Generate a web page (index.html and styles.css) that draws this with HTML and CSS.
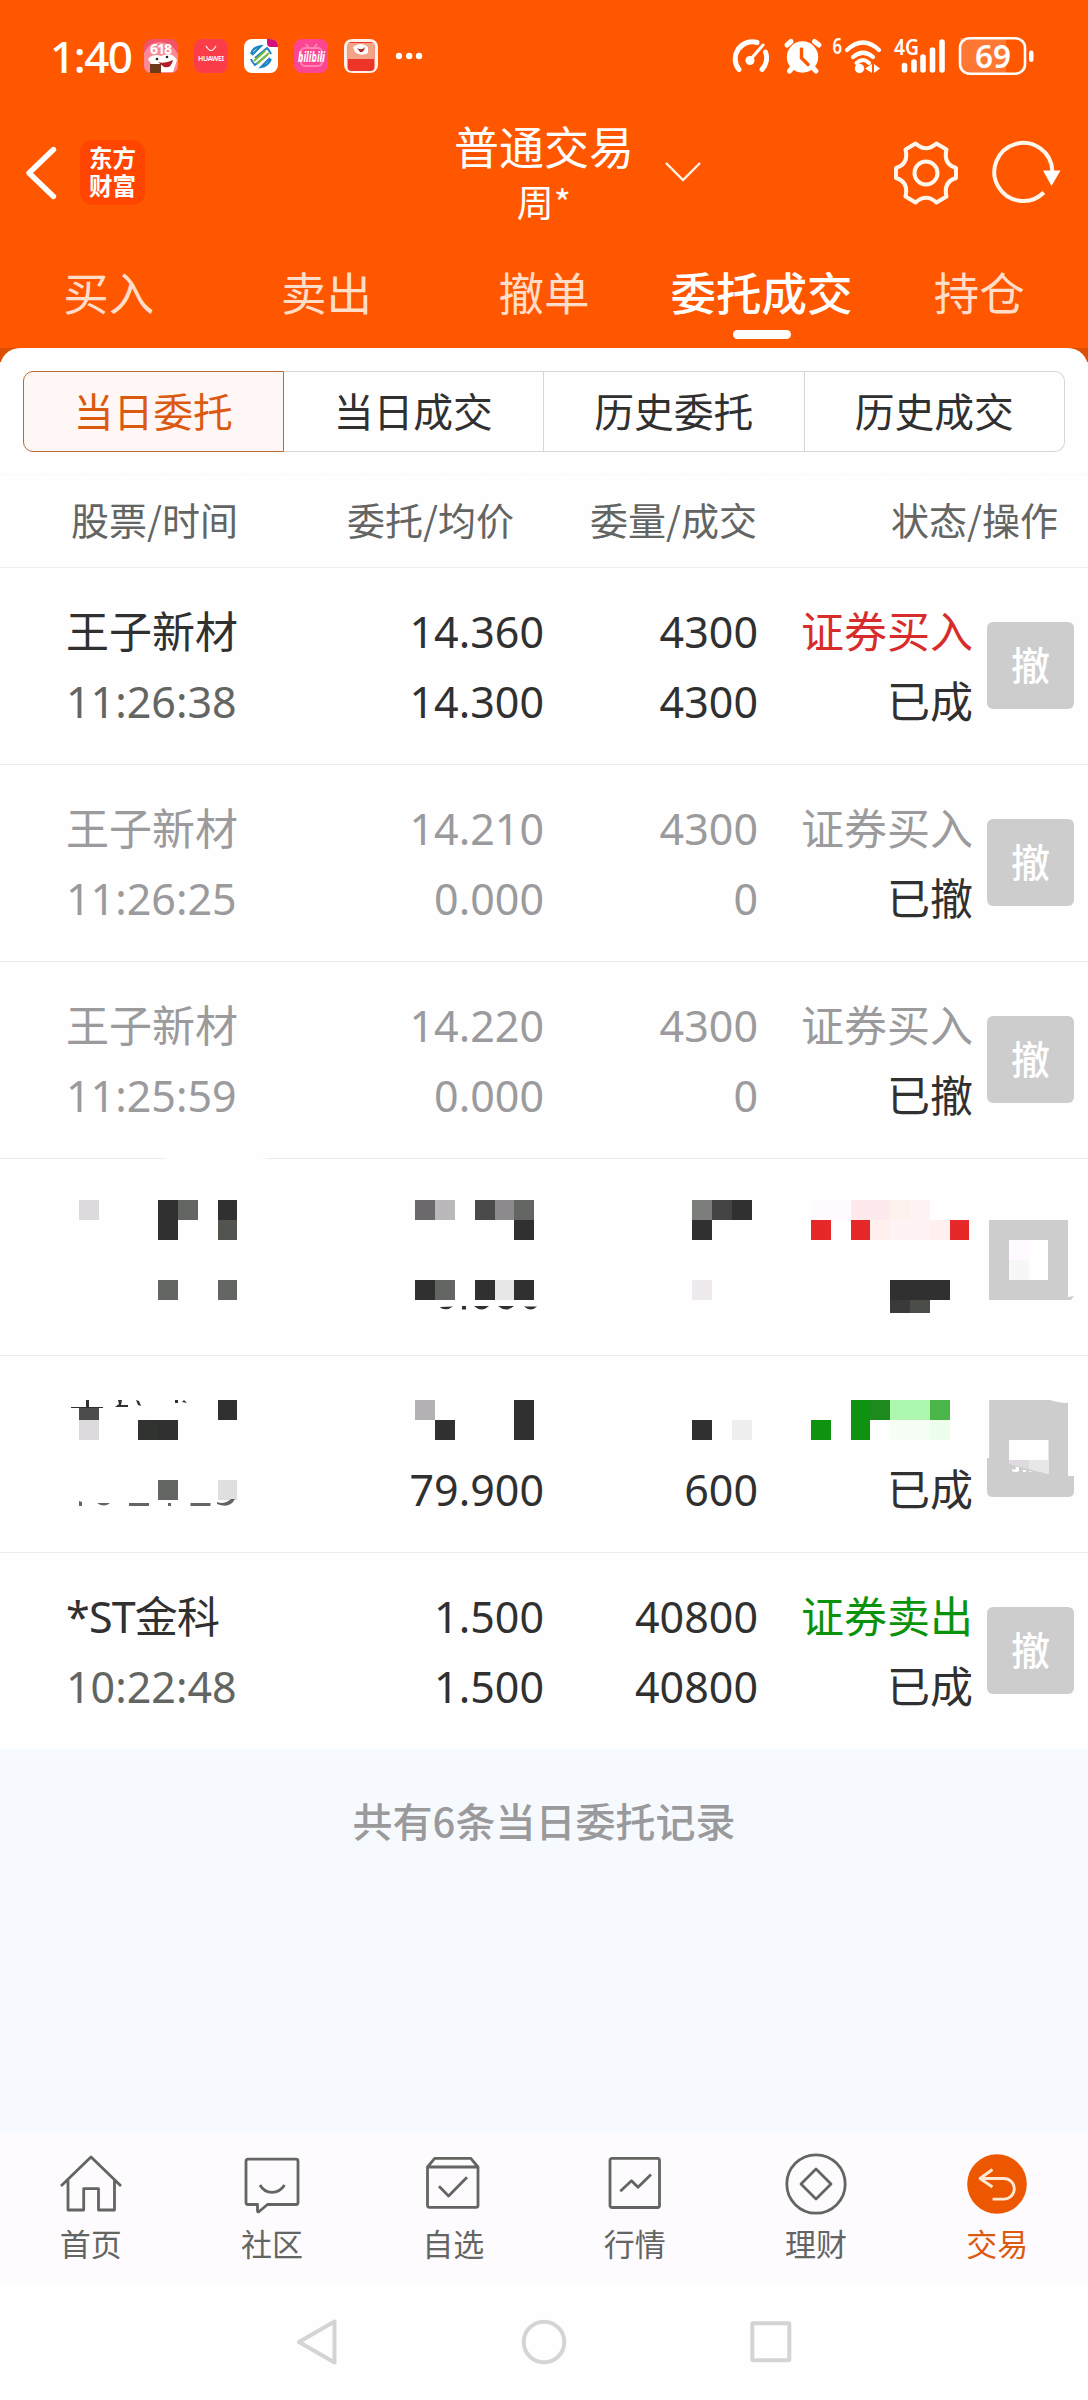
FILE: index.html
```html
<!DOCTYPE html>
<html lang="zh-CN">
<head>
<meta charset="utf-8">
<title>普通交易</title>
<link rel="stylesheet" href="styles.css">
</head>
<body>
<div class="screen">
  <header class="header">
    <div class="status">
      <span class="clock">1:40</span>
      <div class="apps">
        <svg class="app" viewBox="0 0 34 34"><rect width="34" height="34" rx="8" fill="#f2526a"/><path d="M0 14Q6 2 17 3T34 15V26Q34 34 26 34H8Q0 34 0 26Z" fill="#fa8a95"/><text x="6" y="15" font-size="14" font-weight="700" fill="#fff" textLength="22">618</text><path d="M4 20Q9 14 17 17Q28 12 33 21L29 33H12Z" fill="#fff"/><path d="M14 23Q21 25 29 21Q27 30 20 28Z" fill="#b01e2c"/><circle cx="13" cy="20" r="1.3" fill="#222"/><circle cx="23" cy="18" r="1.3" fill="#222"/><rect x="6" y="25" width="11" height="9" fill="#6d3b1c"/></svg>
        <svg class="app" viewBox="0 0 34 34"><rect width="34" height="34" rx="8" fill="#fb3d49"/><path d="M12 7Q17 16 22 7" fill="none" stroke="#fff" stroke-width="1.1"/><text x="4" y="22" font-size="7" font-weight="600" fill="#fff" textLength="26">HUAWEI</text></svg>
        <svg class="app" viewBox="0 0 34 34"><rect width="34" height="34" rx="8" fill="#fff"/><path d="M23 0H26Q34 0 34 8H27Q23 8 23 4Z" fill="#d3107c"/><g fill="none" stroke-width="2"><path d="M7 15Q9 8 17 7L8 16M11 19L23 9Q26 12 27 15M27 20Q24 27 17 28L26 19M23 16L11 26Q8 23 7 20" stroke="#1b83c4"/><path d="M10 22L21 12M13 25L25 14" stroke="#7fb934"/></g></svg>
        <svg class="app" viewBox="0 0 34 34"><rect width="34" height="34" rx="8" fill="#fd4691"/><rect x="7" y="9" width="21" height="18" rx="4" fill="none" stroke="#ff83b5" stroke-width="2"/><path d="M12 5L15 9M23 5L20 9" stroke="#ff83b5" stroke-width="2"/><text x="4" y="23" font-size="14" font-weight="700" font-style="italic" fill="#fff" textLength="27" lengthAdjust="spacingAndGlyphs">bilibili</text></svg>
        <svg class="app" viewBox="0 0 34 34"><rect width="34" height="34" rx="8" fill="#fff1ea"/><rect x="3.5" y="3" width="27" height="29" rx="4" fill="#ed3429"/><path d="M4 4H30V20H4Z" fill="#f3a487"/><path d="M9 8Q17 2 24 8V14Q17 18 11 13Z" fill="#fff"/><path d="M13 9Q18 12 21 8Q20 14 16 13Z" fill="#a62822"/></svg>
      </div>
      <svg class="more" viewBox="0 0 28 8"><g fill="#fff"><circle cx="4" cy="4" r="3.2"/><circle cx="14.200" cy="4" r="3.2"/><circle cx="24" cy="4" r="3.2"/></g></svg>
      <svg class="signals" viewBox="724 32 316 48">
        <g fill="none" stroke="#fff" stroke-width="5" stroke-linecap="round">
          <path d="M739 69.500A17 17 0 0 1 757 42.500M765.500 52A17 17 0 0 1 762 69.500"/>
          <path d="M750 60L763 45" stroke-width="3"/>
          <path d="M787 45L791 41.500M814.500 41.500L819 45M789.500 71L793 67M812 67L816 71"/>
          <path d="M847 50Q863 35 879 50M853 57Q863 48.500 873 57" stroke-width="4.200"/>
          <path d="M856.500 63Q860 60 863 60Q866 60 869 63" stroke-width="4"/>
          <path d="M904.500 65.500V70M914 62V70M923 57V70M932.500 50V70M942 42V70" stroke-width="5.600"/>
        </g>
        <g fill="#fff">
          <circle cx="750" cy="60.500" r="4.500"/><circle cx="802.500" cy="57" r="15.700"/><circle cx="859.500" cy="68.500" r="4.700"/>
          <path d="M872 64V73L865 68.500ZM874 64L880 68.500L874 73Z"/>
          <rect x="1029" y="50.500" width="4.500" height="11.500" rx="2.200"/>
        </g>
        <path d="M801.500 49V58L808 64.500" fill="none" stroke="#ff5700" stroke-width="3.400" stroke-linecap="round"/>
        <path d="M960 38H1006V74H968Q960 74 960 66Z" fill="#fff" opacity=".2"/>
        <rect x="960" y="38.200" width="65" height="35.500" rx="9.500" fill="none" stroke="#fff" stroke-width="2.600"/>
        <g fill="#fff" font-weight="600"><text x="832.500" y="53.500" font-size="21" textLength="9.500" lengthAdjust="spacingAndGlyphs">6</text><text x="894" y="55" font-size="22" textLength="25" lengthAdjust="spacingAndGlyphs">4G</text><text x="975" y="67.800" font-size="33" textLength="36" lengthAdjust="spacingAndGlyphs">69</text></g>
      </svg>
    </div>

    <div class="titlebar">
      <div class="brand">
        <svg class="back" viewBox="0 0 32 56"><path d="M28.500 4.500L4 28L28.500 51.500" fill="none" stroke="#fff" stroke-width="5.400" stroke-linecap="round" stroke-linejoin="round"/></svg>
        <div class="logo">东方财富</div>
      </div>
      <div class="account">
        <h1>普通交易</h1>
        <p>周*</p>
      </div>
      <div class="tools">
        <svg class="chevron" viewBox="0 0 38 22"><path d="M2 2L19 19L36 2" fill="none" stroke="#fff4e6" stroke-width="2.400"/></svg>
        <svg class="gear" viewBox="-34 -34 68 68"><g fill="none" stroke="#fff6ec" stroke-width="4" stroke-linejoin="round"><path d="M-10.400-29.500Q0-20 10.400-29.500L20.500-23.500Q17-9 30-5V5Q17 9 20.500 23.500L10.400 29.500Q0 20-10.400 29.500L-20.500 23.500Q-17 9-30 5V-5Q-17-9-20.500-23.500Z"/><circle r="11.500"/></g></svg>
        <svg class="refresh" viewBox="-34 -34 72 68"><path d="M29.300-2A29 29 0 1 0 20.800 19.500" fill="none" stroke="#fff6ec" stroke-width="4"/><path d="M20-2.500H37.500L28.500 13Z" fill="#fff"/></svg>
      </div>
    </div>

    <nav class="tabs">
      <span>买入</span><span>卖出</span><span>撤单</span><span class="current">委托成交</span><span>持仓</span>
    </nav>
  </header>

  <main class="sheet-back">
    <div class="sheet">
      <div class="segments">
        <span class="on">当日委托</span><span>当日成交</span><span>历史委托</span><span>历史成交</span>
      </div>
      <div class="columns">
        <span>股票/时间</span><span>委托/均价</span><span>委量/成交</span><span>状态/操作</span>
      </div>

      <section class="row">
        <div class="cell name"><b>王子新材</b><i>11:26:38</i></div>
        <div class="cell"><b>14.360</b><b>14.300</b></div>
        <div class="cell"><b>4300</b><b>4300</b></div>
        <div class="cell"><b class="buy">证券买入</b><b>已成</b></div>
        <span class="cancel">撤</span>
      </section>
      <section class="row void">
        <div class="cell name"><b>王子新材</b><i>11:26:25</i></div>
        <div class="cell"><b>14.210</b><b>0.000</b></div>
        <div class="cell"><b>4300</b><b>0</b></div>
        <div class="cell"><b>证券买入</b><b class="state">已撤</b></div>
        <span class="cancel">撤</span>
      </section>
      <section class="row void worn">
        <div class="cell name"><b>王子新材</b><i>11:25:59</i></div>
        <div class="cell"><b>14.220</b><b>0.000</b></div>
        <div class="cell"><b>4300</b><b>0</b></div>
        <div class="cell"><b>证券买入</b><b class="state">已撤</b></div>
        <span class="cancel">撤</span>
      </section>

      <!-- Redacted order: mosaic tiles on a 55-column grid -->
      <section class="row masked">
        <svg class="mosaic" viewBox="0 1159 1088 196">
          <g transform="scale(19.782 20)" shape-rendering="crispEdges">
            <g fill="#303030"><path d="M8 60h1v2h-1zM11 60h1v1h-1zM26 61h1v1h-1zM37 60h1v1h-1zM35 61h1v1h-1zM21 64h1v1h-1zM24 64h1v1h-1zM26 64h1v1h-1zM45 64h3v1h-3z"/></g>
            <g fill="#636562"><path d="M9 60h1v1h-1zM26 60h1v1h-1zM8 64h1v1h-1zM11 64h1v1h-1zM22 64h1v1h-1z"/></g>
            <rect x="4" y="60" width="1" height="1" fill="#dddadd"/><rect x="11" y="61" width="1" height="1" fill="#525450"/>
            <rect x="21" y="60" width="1" height="1" fill="#6b696c"/><rect x="22" y="60" width="1" height="1" fill="#bab8bb"/><rect x="24" y="60" width="1" height="1" fill="#4a4a4a"/><rect x="25" y="60" width="1" height="1" fill="#8d8a8e"/><rect x="25" y="64" width="1" height="1" fill="#e7e7e7"/>
            <rect x="35" y="60" width="1" height="1" fill="#7c7e7b"/><rect x="36" y="60" width="1" height="1" fill="#444"/><rect x="35" y="64" width="1" height="1" fill="#eeeaee"/>
            <rect x="41" y="60" width="2" height="1" fill="#fefaff"/><rect x="43" y="60" width="2" height="1" fill="#fee9ed"/><rect x="45" y="60" width="1" height="1" fill="#fef2ec"/><rect x="46" y="60" width="1" height="1" fill="#fff3f6"/>
            <rect x="44" y="61" width="4" height="1" fill="#ffefee"/><rect x="45" y="61" width="2" height="1" fill="#fff3f6"/>
            <path d="M41 61h1v1h-1zM43 61h1v1h-1zM48 61h1v1h-1z" fill="#e62829"/>
            <rect x="45" y="65" width="1" height=".65" fill="#3a3a3a"/><rect x="46" y="65" width="1" height=".65" fill="#4b4d49"/>
            <rect x="50" y="61" width="4" height="4" fill="#cdcdcd"/><rect x="51" y="62" width="2" height="2" fill="#fefefe"/><rect x="51" y="62" width="1" height="1" fill="#fffaff"/><rect x="51" y="63" width="1" height="1" fill="#f7f7f7"/>
          </g>
          <path d="M1068 1297L1074 1296L1071 1300H1066Z" fill="#cdcdcd"/>
          <path d="M440 1307L453 1306.500Q447 1311 441 1308ZM462 1306h4v3.500h-4zM474 1306h15q-7.500 7-15 0M498 1306h16q-8 7-16 0M524 1306.500h13q-6 6-13 0" fill="#303030"/>
        </svg>
      </section>

      <section class="row masked">
        <div class="cell name"></div>
        <div class="cell"><b></b><b>79.900</b></div>
        <div class="cell"><b></b><b>600</b></div>
        <div class="cell"><b></b><b>已成</b></div>
        <svg class="mosaic" viewBox="0 1356 1088 196">
          <path d="M989.200 1400H1050Q1058 1403 1068 1403V1476H1074V1491Q1074 1497 1068 1497H993Q987 1497 987 1491V1458H989.200Z" fill="#cdcdcd"/>
          <path d="M1009 1440H1048.500V1474L1009 1463.500Z" fill="#fefefe"/><path d="M1009 1460H1029V1469L1009 1463.500Z" fill="#dfdadf"/><path d="M1029 1460H1048.500V1474L1029 1469Z" fill="#e7e7e7"/>
          <path d="M1012 1469q4 2 4-2h3v4q-4 2-7 0zM1023 1470h3v2h-3zM1029 1471l4 1h-4z" fill="#fff"/>
          <g transform="scale(19.782 20)" shape-rendering="crispEdges">
            <path d="M8 71h1v1h-1zM11 70h1v1h-1zM22 71h1v1h-1zM26 70h1v2h-1zM35 71h1v1h-1z" fill="#303030"/>
            <rect x="7" y="71" width="1" height="1" fill="#303330"/><rect x="4" y="70.350" width="1" height=".65" fill="#4c4c4c"/><rect x="4" y="71" width="1" height="1" fill="#dddadd"/><rect x="21" y="70" width="1" height="1" fill="#b3b1b4"/><rect x="37" y="71" width="1" height="1" fill="#eee"/>
            <path d="M43 70h1v2h-1zM41 71h1v1h-1z" fill="#0f920f"/><rect x="44" y="70" width="1" height="1" fill="#1c8a1c"/><rect x="45" y="70" width="2" height="1" fill="#aef7ae"/><rect x="47" y="70" width="1" height="1" fill="#4ab549"/><rect x="45" y="71" width="2" height="1" fill="#f6fef6"/><rect x="47" y="71" width="1" height="1" fill="#edfeed"/>
            <rect x="8" y="74" width="1" height="1" fill="#636562"/><rect x="11" y="74" width="1" height="1" fill="#dfdfdf"/>
          </g>
          <path d="M86 1400h3v7h14v1H71v-1h15zM118 1400h4l-1 5h7v2h-13l4-3zM136 1400l3 1 2 5-3-1zM175 1400h3v3h-3zM182 1402l2-2 3 3z" fill="#303030"/>
          <path d="M79 1501l3 1v4h-3zM97 1503h13q-6 5-13 0M129 1503h20v3h-20zM168 1503h3v3h-3zM190.500 1503h20v3h-20zM217 1502q7 3 14-3h4q-5 10-18 5z" fill="#636562"/>
        </svg>
      </section>

      <section class="row last">
        <div class="cell name"><b class="mixed">*ST金科</b><i>10:22:48</i></div>
        <div class="cell"><b>1.500</b><b>1.500</b></div>
        <div class="cell"><b>40800</b><b>40800</b></div>
        <div class="cell"><b class="sell">证券卖出</b><b>已成</b></div>
        <span class="cancel">撤</span>
      </section>
    </div>
  </main>

  <div class="summary">共有6条当日委托记录</div>

  <nav class="dock">
    <a><svg viewBox="0 0 64 64"><path d="M2 34L32 5L62 34M9 27V58H24.700V36.700H39.500V58H55.500V27"/></svg>首页</a>
    <a><svg viewBox="0 0 64 64"><path d="M8 7.200H56Q58 7.200 58 9.200V50.500Q58 52.500 56 52.500H27.500L18.500 60Q17.500 60 17.500 59V52.500H8Q6 52.500 6 50.500V9.200Q6 7.200 8 7.200ZM20 33Q24 40.300 32 40.300T44.500 33"/></svg>社区</a>
    <a><svg viewBox="0 0 64 64"><path d="M6.500 15L13.700 6.300H49.800L57 15V53.500Q57 55.300 55 55.300H8.500Q6.500 55.300 6.500 53.500ZM6.500 15H57M18 34.300L27.600 44L46 25.300"/></svg>自选</a>
    <a><svg viewBox="0 0 64 64"><rect x="7" y="6.300" width="49.500" height="49.200" rx="2"/><path d="M17.300 39.300L28.500 28.700L35 35.300L48 22.500"/></svg>行情</a>
    <a><svg viewBox="0 0 64 64"><circle cx="32" cy="32" r="29.200"/><path d="M32 17L47 32L32 47L17 32Z"/></svg>理财</a>
    <a class="here"><svg viewBox="0 0 64 64"><circle cx="32" cy="32" r="29.800"/><path d="M27.500 17.500L15 26.500L27.500 35M15 26.500H39A10.300 10.300 0 0 1 39 47.100H27.600"/></svg>交易</a>
  </nav>

  <div class="sysnav">
    <svg viewBox="0 0 48 48"><path d="M6 24L41.500 3.500V44.500Z"/></svg>
    <svg viewBox="0 0 48 48"><circle cx="24" cy="24" r="20.300"/></svg>
    <svg viewBox="0 0 48 48"><rect x="5.300" y="5.300" width="37" height="37" rx="1"/></svg>
  </div>
</div>
</body>
</html>
```
FILE: styles.css
```css
* { box-sizing: border-box; }

body {
  margin: 0;
  background: #fefefe;
  color: #303030;
  font-family: "Noto Sans CJK SC", sans-serif;
}

svg { display: block; flex: none; overflow: visible; }
svg text { font-family: "Noto Sans", sans-serif; }

.screen {
  width: 1088px;
  height: 2400px;
  display: flex;
  flex-direction: column;
}

/* Header */
.header { height: 348px; background: #ff5700; color: #fff; }

.status {
  height: 112px;
  padding-left: 50px;
  display: flex;
  align-items: center;
}
.clock {
  width: 94px;
  font: 500 44px/44px "Noto Sans", sans-serif;
  letter-spacing: -1.5px;
}
.apps { display: flex; gap: 16px; }
.app { width: 34px; height: 34px; }
.more { width: 28px; height: 8px; margin-left: 17px; }
.signals { width: 316px; height: 48px; margin-left: auto; margin-right: 48px; }

.titlebar {
  height: 123px;
  display: grid;
  grid-template-columns: 1fr 240px 1fr;
}
.brand { display: flex; align-items: flex-start; padding: 28px 0 0 25px; }
.back { width: 32px; height: 56px; margin-top: 5px; }
.logo {
  width: 65px;
  height: 65px;
  margin-left: 23px;
  padding: 3px 8px 0 9px;
  border-radius: 12px;
  background: #ff4500;
  font-size: 23.5px;
  font-weight: 700;
  line-height: 28px;
}
.account { text-align: center; }
.account h1 {
  margin: 10px 0 0;
  font-size: 45px;
  font-weight: 400;
  line-height: 47px;
}
.account p { margin: 14px 0 0; font-size: 37px; line-height: 37px; }
.tools { display: flex; }
.chevron { width: 38px; height: 22px; margin: 49px 0 0 0; }
.gear { width: 68px; height: 68px; margin: 27px 0 0 190px; }
.refresh { width: 72px; height: 68px; margin: 27px 0 0 29px; }

.tabs {
  height: 113px;
  display: grid;
  grid-template-columns: repeat(5, 1fr);
  text-align: center;
  font-size: 45.5px;
  line-height: 113px;
  color: #ffddc8;
}
.tabs .current { color: #fff; position: relative; font-weight: 500; }
.tabs .current::after {
  content: "";
  position: absolute;
  left: 50%;
  bottom: 9px;
  width: 58px;
  height: 9px;
  margin-left: -29px;
  border-radius: 5px;
  background: #fff;
}

/* Sheet */
.sheet-back { background: linear-gradient(#dc4e04 0 14px, #fefefe 14px); }
.sheet {
  height: 1401px;
  padding-top: 23px;
  border-radius: 20px 20px 0 0;
  background: #fefefe;
}
.segments {
  height: 81px;
  margin: 0 23px;
  display: grid;
  grid-template-columns: repeat(4, 1fr);
  text-align: center;
  font-size: 39.8px;
  line-height: 75px;
}
.segments span { border: 1px solid #d6d6d9; border-left-width: 0; }
.segments span:last-child { border-radius: 0 10px 10px 0; }
.segments .on {
  border: 1px solid #b86c35;
  border-radius: 10px 0 0 10px;
  background: #fff6f6;
  color: #dc5a10;
}
.columns {
  height: 94px;
  margin-top: 22px;
  padding: 0 30px 0 66px;
  border-top: 1px dashed #f7f7f7;
  border-bottom: 1px solid #eee;
  display: grid;
  grid-template-columns: 172px 276px 243px 1fr;
  text-align: right;
  font-size: 38px;
  line-height: 88px;
  color: #636562;
}

/* Order rows */
.row {
  height: 197px;
  padding: 27px 14px 0 66px;
  border-bottom: 1px solid #ececec;
  display: grid;
  grid-template-columns: 234px 244px 214px 215px 101px;
  position: relative;
}
.cell { padding-top: 2px; text-align: right; }
.cell b, .cell i {
  display: block;
  height: 70px;
  font: 400 43px/70px "Noto Sans", "Noto Sans CJK SC", sans-serif;
}
.cell.name { text-align: left; }
.cell i { color: #636562; }
.cell .mixed { letter-spacing: -0.8px; }
.cell .buy { color: #d82c2b; }
.cell .sell { color: #0a920a; }
.void b, .void i { color: #9b9a9c; }
.void .state { color: #303030; }
.cancel {
  width: 87px;
  height: 87px;
  margin: 27px 0 0 14px;
  border-radius: 6px;
  background: #cdcdcd;
  color: #fff;
  font-size: 39px;
  font-weight: 500;
  line-height: 83px;
  text-align: center;
}
.worn {
  border-bottom-color: transparent;
  background: linear-gradient(90deg, #ececec 160px, transparent 170px 260px, #ececec 270px) bottom / 100% 1px no-repeat border-box;
}
.mosaic { position: absolute; left: 0; top: 0; width: 1088px; height: 196px; }
.last { border-bottom: 0; }

.summary {
  flex: 1;
  padding-top: 41px;
  background: #f6faff;
  text-align: center;
  font-size: 40px;
  font-weight: 500;
  line-height: 60px;
  color: #9a999b;
}

/* Bottom navigation */
.dock {
  height: 150px;
  background: #fefbff;
  display: grid;
  grid-template-columns: repeat(6, 1fr);
}
.dock a {
  padding-top: 19px;
  display: flex;
  flex-direction: column;
  align-items: center;
  gap: 7px;
  font-size: 31px;
  line-height: 40px;
  color: #636562;
}
.dock svg {
  width: 64px;
  height: 64px;
  fill: none;
  stroke: #636562;
  stroke-width: 2.8;
  stroke-linejoin: round;
}
.dock .here { color: #dc5a10; }
.dock .here svg { stroke: #ffe9d5; }
.dock .here circle { fill: #ed5700; stroke: none; }

.sysnav {
  height: 117px;
  display: flex;
  align-items: center;
  justify-content: center;
  gap: 179px;
}
.sysnav svg {
  width: 48px;
  height: 48px;
  fill: none;
  stroke: #d5d3d6;
  stroke-width: 4;
  stroke-linejoin: round;
}
```
